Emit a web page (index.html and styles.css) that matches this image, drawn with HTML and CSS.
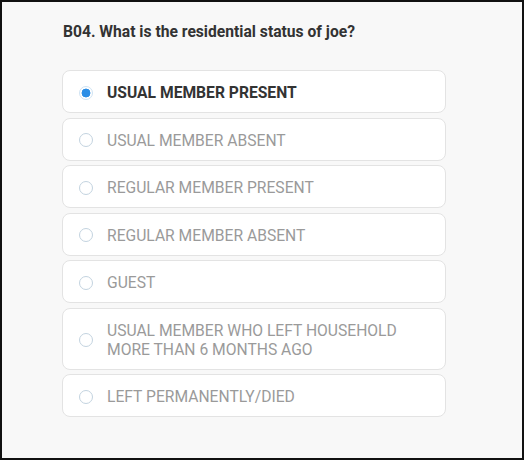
FILE: index.html
```html
<!DOCTYPE html>
<html>
<head>
<meta charset="utf-8">
<link rel="stylesheet" href="styles.css">
</head>
<body>
<div class="frame">
  <div class="question">
    <h1 class="title">B04. What is the residential status of joe?</h1>
    <div class="options">
      <label class="option selected"><span class="radio"></span><span class="text">USUAL MEMBER PRESENT</span></label>
      <label class="option"><span class="radio"></span><span class="text">USUAL MEMBER ABSENT</span></label>
      <label class="option"><span class="radio"></span><span class="text">REGULAR MEMBER PRESENT</span></label>
      <label class="option"><span class="radio"></span><span class="text">REGULAR MEMBER ABSENT</span></label>
      <label class="option"><span class="radio"></span><span class="text">GUEST</span></label>
      <label class="option"><span class="radio"></span><span class="text">USUAL MEMBER WHO LEFT HOUSEHOLD<br>MORE THAN 6 MONTHS AGO</span></label>
      <label class="option"><span class="radio"></span><span class="text">LEFT PERMANENTLY/DIED</span></label>
    </div>
  </div>
</div>
</body>
</html>
```
FILE: styles.css
```css
html, body {
  margin: 0;
  padding: 0;
  background: #ffffff;
}
.frame {
  box-sizing: border-box;
  width: 524px;
  height: 460px;
  border: 2px solid #111;
  background: #f8f8f8;
  font-family: Roboto, "Liberation Sans", sans-serif;
}
.question {
  padding: 21px 0 0 60px;
  width: 384px;
}
.title {
  margin: 0 0 0 1px;
  font-size: 15.65px;
  line-height: 18px;
  font-weight: 700;
  color: #333333;
}
.options {
  margin-top: 29px;
  display: flex;
  flex-direction: column;
  gap: 4.5px;
}
.option {
  display: flex;
  align-items: center;
  gap: 14px;
  padding: 12px 16px 10px;
  background: #ffffff;
  border: 1px solid #e3e3e3;
  border-radius: 8px;
  font-size: 15.65px;
  line-height: 19px;
  color: #9a9a9a;
}
.radio {
  flex: none;
  box-sizing: border-box;
  width: 14px;
  height: 14px;
  border-radius: 50%;
  border: 1.6px solid #c3d3df;
}
.option.selected .text {
  font-weight: 700;
  color: #333333;
}
.option.selected .radio {
  border: 1.6px solid #cfe3f3;
  background: radial-gradient(circle, #2b8ee6 0 4.2px, #ffffff 4.7px);
}
```
